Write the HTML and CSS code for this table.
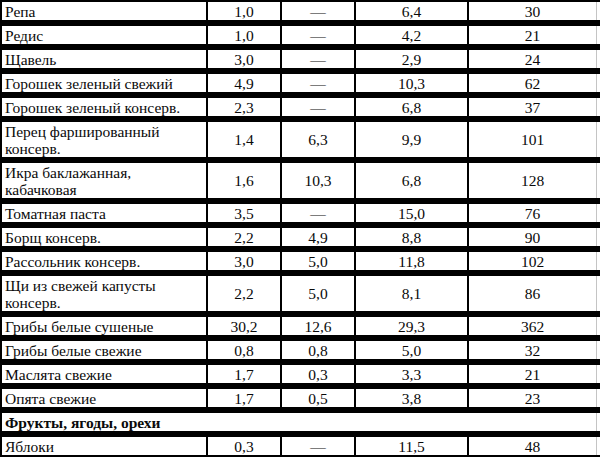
FILE: index.html
```html
<!DOCTYPE html>
<html lang="ru">
<head>
<meta charset="utf-8">
<title>Таблица</title>
<link rel="stylesheet" href="styles.css">
</head>
<body>
<div class="tbl">
  <div class="c name">Репа</div><div class="c">1,0</div><div class="c">—</div><div class="c">6,4</div><div class="c last">30</div>
  <div class="c name">Редис</div><div class="c">1,0</div><div class="c">—</div><div class="c">4,2</div><div class="c last">21</div>
  <div class="c name">Щавель</div><div class="c">3,0</div><div class="c">—</div><div class="c">2,9</div><div class="c last">24</div>
  <div class="c name">Горошек зеленый свежий</div><div class="c">4,9</div><div class="c">—</div><div class="c">10,3</div><div class="c last">62</div>
  <div class="c name">Горошек зеленый консерв.</div><div class="c">2,3</div><div class="c">—</div><div class="c">6,8</div><div class="c last">37</div>
  <div class="c name tall">Перец фаршированный<br>консерв.</div><div class="c tall">1,4</div><div class="c tall">6,3</div><div class="c tall">9,9</div><div class="c last tall">101</div>
  <div class="c name tall">Икра баклажанная,<br>кабачковая</div><div class="c tall">1,6</div><div class="c tall">10,3</div><div class="c tall">6,8</div><div class="c last tall">128</div>
  <div class="c name">Томатная паста</div><div class="c">3,5</div><div class="c">—</div><div class="c">15,0</div><div class="c last">76</div>
  <div class="c name">Борщ консерв.</div><div class="c">2,2</div><div class="c">4,9</div><div class="c">8,8</div><div class="c last">90</div>
  <div class="c name">Рассольник консерв.</div><div class="c">3,0</div><div class="c">5,0</div><div class="c">11,8</div><div class="c last">102</div>
  <div class="c name tall">Щи из свежей капусты<br>консерв.</div><div class="c tall">2,2</div><div class="c tall">5,0</div><div class="c tall">8,1</div><div class="c last tall">86</div>
  <div class="c name">Грибы белые сушеные</div><div class="c">30,2</div><div class="c">12,6</div><div class="c">29,3</div><div class="c last">362</div>
  <div class="c name">Грибы белые свежие</div><div class="c">0,8</div><div class="c">0,8</div><div class="c">5,0</div><div class="c last">32</div>
  <div class="c name">Маслята свежие</div><div class="c">1,7</div><div class="c">0,3</div><div class="c">3,3</div><div class="c last">21</div>
  <div class="c name">Опята свежие</div><div class="c">1,7</div><div class="c">0,5</div><div class="c">3,8</div><div class="c last">23</div>
  <div class="c name section">Фрукты, ягоды, орехи</div>
  <div class="c name">Яблоки</div><div class="c">0,3</div><div class="c">—</div><div class="c">11,5</div><div class="c last">48</div>
</div>
</body>
</html>
```
FILE: styles.css
```css
html, body {
  margin: 0;
  padding: 0;
  background: #fff;
}

.tbl {
  width: 600px;
  display: grid;
  grid-template-columns: 206px 74px 74px 113px 133px;
  grid-auto-rows: auto;
  border-top: 2px solid #000;
  font-family: "Liberation Serif", "Times New Roman", serif;
  font-size: 15.5px;
  color: #0a0a0a;
}

.c {
  box-sizing: border-box;
  height: 24px;
  border-left: 2px solid #000;
  border-bottom: 6px solid #000;
  display: flex;
  align-items: center;
  justify-content: center;
  line-height: 17px;
  white-space: nowrap;
  overflow: hidden;
}

.c.tall {
  height: 41px;
}

.c.name {
  justify-content: flex-start;
  padding-left: 3px;
  text-align: left;
}

.c.last {
  padding-right: 4px;
  background: linear-gradient(to left, #fff 0, #fff 3px, #c4c4c4 3px, #c4c4c4 4px, #fff 4px);
}

.c.section {
  grid-column: 1 / -1;
  font-weight: bold;
  background: linear-gradient(to left, #fff 0, #fff 3px, #c4c4c4 3px, #c4c4c4 4px, #fff 4px);
}
```
